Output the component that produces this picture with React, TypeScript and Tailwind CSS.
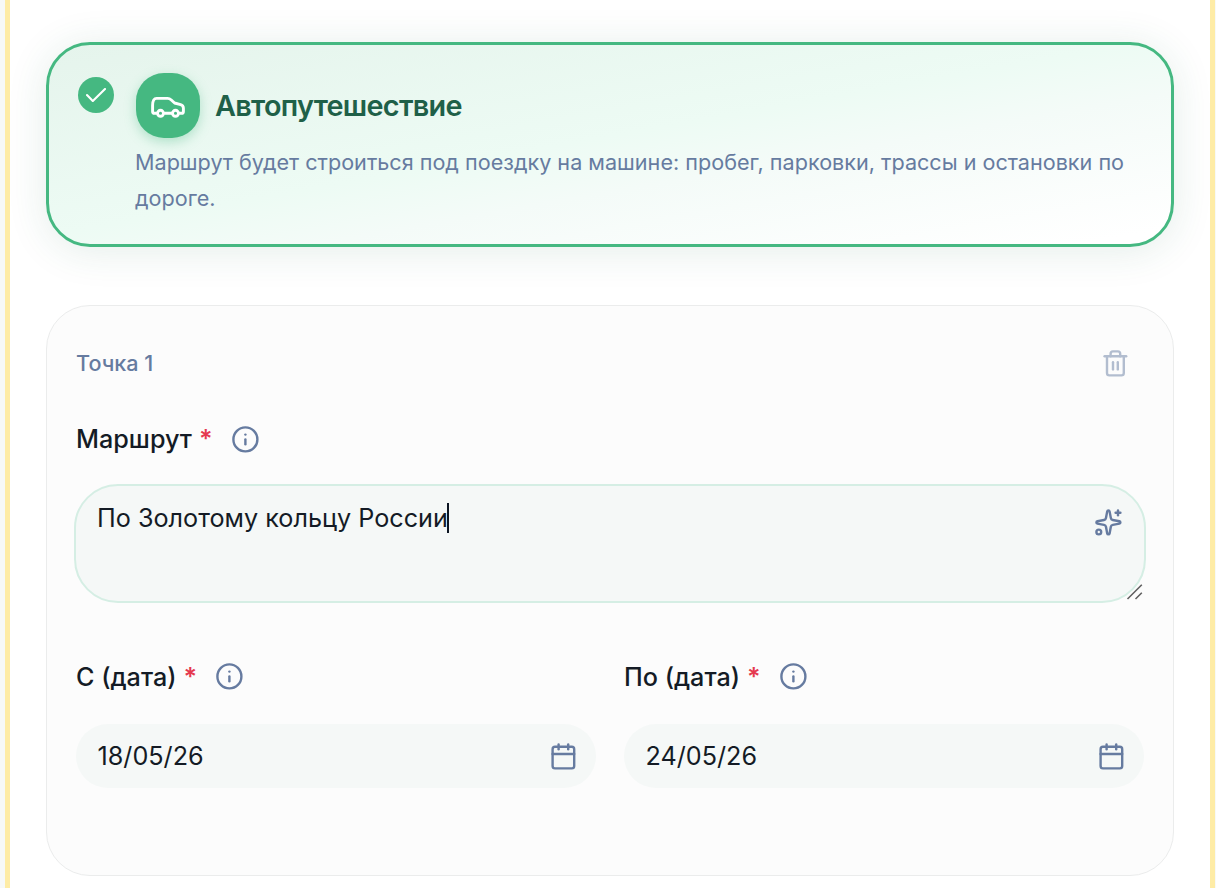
import { Calendar, Info, Sparkles, Trash2 } from 'lucide-react'

const CarIcon = () => (
  <svg width="34" height="22" viewBox="0 0 34 22" fill="none" stroke="white" strokeWidth="2.9" strokeLinecap="round" strokeLinejoin="round">
    <path d="M5 17.3H3.6C2.3 17.3 1.6 16.6 1.6 15.4V9.6C1.6 6 2.4 2.4 5.6 2.4H16.6C18.2 2.4 19.2 3 20.3 4L23.6 7L29.6 8.6C31.6 9.2 32.4 10.4 32.4 12.2V15.4C32.4 16.6 31.8 17.3 30.6 17.3H29" />
    <path d="M14 17.3H21" />
    <circle cx="9.5" cy="17.3" r="3" />
    <circle cx="24.5" cy="17.3" r="3" />
  </svg>
)

const CheckIcon = () => (
  <svg width="20" height="14" viewBox="0 0 20 14" fill="none" stroke="white" strokeWidth="2.1" strokeLinecap="round" strokeLinejoin="round">
    <path d="M1 7L6.8 13L19 1" />
  </svg>
)

const FieldLabel = ({ text, className = '' }: { text: string; className?: string }) => (
  <div className="flex h-8 items-center">
    <div className={`flex gap-[7px] text-[25.2px] font-medium leading-8 ${className}`}>
      <span className="text-[#141b25]">{text}</span>
      <span className="font-semibold text-[#e5394f]">*</span>
    </div>
    <Info size={28.8} className="ml-[18px] text-[#667ba0]" />
  </div>
)

const DateField = ({ label, value }: { label: string; value: string }) => (
  <div className="w-[520px]">
    <FieldLabel text={label} className="pt-px" />
    <div className="mt-8 flex h-16 items-center justify-between rounded-full bg-[#f5f8f7] pl-[21.5px] pr-[18px]">
      <span className="text-[25.2px] leading-8 text-[#141b25]">{value}</span>
      <Calendar size={28.8} className="text-[#667ba0]" />
    </div>
  </div>
)

const App = () => {
  const dates = [
    { label: 'С (дата)', value: '18/05/26' },
    { label: 'По (дата)', value: '24/05/26' },
  ]

  return (
    <div className="h-[888px] w-[1216px] overflow-hidden bg-[#f7f9f8] pl-[5px] pr-px font-['Inter',sans-serif]">
      <main className="h-full border-x-[5px] border-[#feeca6] bg-white px-9 pt-[42px]">
        {/* Тип поездки */}
        <section className="flex h-[205px] rounded-[44px] border-[3px] border-[#45b881] bg-[linear-gradient(170deg,#e5f4ec_0%,#edfbf4_48%,#f4fbf8_62%,#ffffff_96%)] pl-[29px] pt-7 shadow-[0_4px_40px_rgba(30,110,75,0.12)]">
          <div className="mt-1 flex size-9 items-center justify-center rounded-full bg-[#45b881]">
            <CheckIcon />
          </div>
          <div className="ml-[22px]">
            <div className="flex items-center gap-[15px]">
              <div className="flex h-[65px] w-16 items-center justify-center rounded-[28px] bg-[#45b881] pt-[3px] shadow-[0_4px_12px_rgba(69,184,129,0.35)]">
                <CarIcon />
              </div>
              <h2 className="text-[28.8px] font-semibold tracking-[-0.72px] text-[#1f6048]">Автопутешествие</h2>
            </div>
            <p className="-ml-px mt-1.5 w-[1005px] text-[21.6px] leading-9 text-[#667ba0]">
              Маршрут будет строиться под поездку на машине: пробег, парковки, трассы и остановки по дороге.
            </p>
          </div>
        </section>

        {/* Точка маршрута */}
        <section className="mt-[58px] h-[571px] rounded-[44px] border border-[#ebecec] bg-[#fcfcfc] pl-[29px] pr-7">
          <div className="flex items-center justify-between pr-[15px] pt-[43px]">
            <span className="text-[21.6px] font-medium leading-[29px] text-[#667ba0]">Точка 1</span>
            <Trash2 size={28.8} className="text-[#b2bdcf]" />
          </div>

          <div className="mt-[45px]">
            <FieldLabel text="Маршрут" />
            <div className="relative -ml-0.5 mt-[29px] flex h-[119px] w-[1072px] justify-between rounded-[44px] border-2 border-[#d5eee4] bg-[#f5f8f7] px-[21px]">
              <div className="mt-[17px] flex h-[30px] items-center">
                <span className="text-[25.2px] leading-[30px] text-[#141b25]">По Золотому кольцу России</span>
                <span className="-ml-px h-[30px] w-0.5 bg-[#0d1622]" />
              </div>
              <Sparkles size={28.8} className="mt-[22px] text-[#667ba0]" />
              <svg className="absolute bottom-0 right-0" width="18" height="18" viewBox="0 0 18 18" stroke="#606060" strokeWidth="1.6">
                <path d="M1.5 16L15.8 1.7M9.5 16L15.8 9.7" />
              </svg>
            </div>
          </div>

          <div className="mt-[57px] flex gap-7">
            {dates.map((date) => (
              <DateField key={date.label} label={date.label} value={date.value} />
            ))}
          </div>
        </section>
      </main>
    </div>
  )
}

export default App
